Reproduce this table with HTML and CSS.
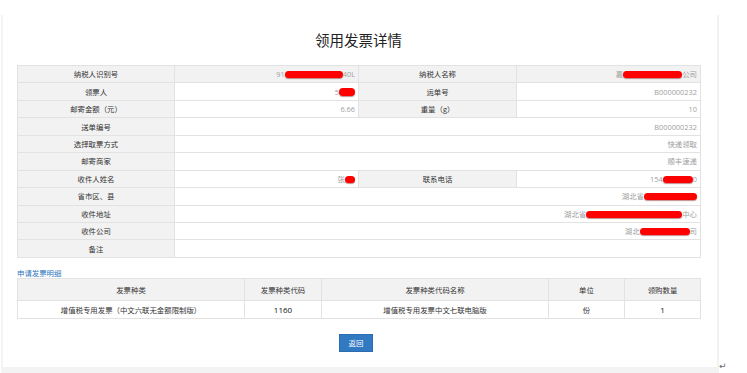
FILE: index.html
```html
<!DOCTYPE html>
<html lang="zh-CN">
<head>
<meta charset="utf-8">
<title>领用发票详情</title>
<link rel="stylesheet" href="styles.css">
</head>
<body>
<div class="page">
  <div class="panel">
    <h1 class="title">领用发票详情</h1>
    <table class="info">
      <colgroup><col class="c1"><col class="c2"><col class="c3"><col class="c4"></colgroup>
      <tr class="head-row">
        <td class="lbl">纳税人识别号</td><td class="val">91<span class="blob b1"></span>40L</td>
        <td class="lbl">纳税人名称</td><td class="val">嘉<span class="blob b2"></span>公司</td>
      </tr>
      <tr>
        <td class="lbl">领票人</td><td class="val">5<span class="blob b3"></span></td>
        <td class="lbl">运单号</td><td class="val">B000000232</td>
      </tr>
      <tr>
        <td class="lbl">邮寄金额（元）</td><td class="val">6.66</td>
        <td class="lbl">重量（g）</td><td class="val">10</td>
      </tr>
      <tr>
        <td class="lbl">送单编号</td><td class="val" colspan="3">B000000232</td>
      </tr>
      <tr>
        <td class="lbl">选择取票方式</td><td class="val" colspan="3">快递领取</td>
      </tr>
      <tr>
        <td class="lbl">邮寄商家</td><td class="val" colspan="3">顺丰速递</td>
      </tr>
      <tr>
        <td class="lbl">收件人姓名</td><td class="val">张<span class="blob b4"></span></td>
        <td class="lbl">联系电话</td><td class="val">154<span class="blob b5"></span>0</td>
      </tr>
      <tr>
        <td class="lbl">省市区、县</td><td class="val" colspan="3">湖北省<span class="blob b6"></span></td>
      </tr>
      <tr>
        <td class="lbl">收件地址</td><td class="val" colspan="3">湖北省<span class="blob b7"></span>中心</td>
      </tr>
      <tr>
        <td class="lbl">收件公司</td><td class="val" colspan="3">湖北<span class="blob b8"></span>司</td>
      </tr>
      <tr>
        <td class="lbl">备注</td><td class="val" colspan="3"></td>
      </tr>
    </table>

    <div class="section-title">申请发票明细</div>
    <table class="detail">
      <colgroup><col class="d1"><col class="d2"><col class="d3"><col class="d4"><col class="d5"></colgroup>
      <tr class="dhead">
        <td>发票种类</td><td>发票种类代码</td><td>发票种类代码名称</td><td>单位</td><td>领购数量</td>
      </tr>
      <tr class="dbody">
        <td>增值税专用发票（中文六联无金额限制版）</td><td class="num">1160</td><td>增值税专用发票中文七联电脑版</td><td>份</td><td class="num">1</td>
      </tr>
    </table>

    <div class="actions">
      <button class="btn" type="button">返回</button>
    </div>
  </div>
  <span class="return-mark">↵</span>
</div>
</body>
</html>
```

FILE: styles.css
```css
html, body {
  margin: 0;
  padding: 0;
  background: #ffffff;
}

body {
  font-family: "Open Sans", "Noto Sans CJK SC", sans-serif;
  color: #333333;
}

.page {
  position: relative;
  width: 747px;
  height: 373px;
  overflow: hidden;
}

.panel {
  margin: 15px 0 0 1px;
  width: 718px;
  height: 358px;
  box-sizing: border-box;
  border-left: 2px solid #f4f4f4;
  border-right: 2px solid #f2f2f2;
  border-bottom: 6px solid #f3f3f3;
  padding: 15px 17px 0 14px;
  display: flex;
  flex-direction: column;
}

.title {
  margin: 0;
  height: 20px;
  line-height: 20px;
  font-size: 14.5px;
  font-weight: normal;
  text-align: center;
  color: #222222;
  font-family: "Noto Sans CJK SC", sans-serif;
  width: 683px;
}

table {
  border-collapse: collapse;
  table-layout: fixed;
  width: 683px;
  font-size: 7.4px;
}

td {
  border: 1px solid #e2e2e2;
  padding: 0 3px;
  white-space: nowrap;
  overflow: hidden;
}

.info {
  margin-top: 15px;
}

.info col.c1 { width: 157px; }
.info col.c2 { width: 184px; }
.info col.c3 { width: 158px; }
.info col.c4 { width: 184px; }

.info td {
  height: 16.45px;
  line-height: 10px;
}

.lbl {
  background: #f2f2f2;
  text-align: center;
  color: #333333;
}

.val {
  text-align: right;
  color: #a0a0a0;
  background: #ffffff;
}

.head-row .val {
  background: #f2f2f2;
}

.blob {
  display: inline-block;
  height: 7px;
  vertical-align: -1px;
  background: #ff0000;
  border-radius: 4px;
  box-shadow: 0 1px 1px rgba(120, 0, 0, 0.45);
}

.b1 { width: 58px; }
.b2 { width: 59px; }
.b3 { width: 16px; height: 8px; }
.b4 { width: 10px; height: 7px; }
.b5 { width: 30px; }
.b6 { width: 53px; }
.b7 { width: 96px; }
.b8 { width: 50px; }

.section-title {
  margin-top: 10px;
  height: 10px;
  line-height: 10px;
  font-size: 7.4px;
  color: #2f75c0;
  margin-bottom: 0;
}

.detail col.d1 { width: 227px; }
.detail col.d2 { width: 77px; }
.detail col.d3 { width: 227px; }
.detail col.d4 { width: 76px; }
.detail col.d5 { width: 76px; }

.detail td {
  text-align: center;
  color: #333333;
}

.detail td.num {
  color: #111111;
  font-size: 8px;
}

.dhead td {
  background: #f2f2f2;
  height: 21.4px;
}

.dbody td {
  background: #ffffff;
  height: 16.6px;
}

.actions {
  display: flex;
  justify-content: center;
  width: 683px;
  margin-top: 15px;
}

.btn {
  width: 34px;
  height: 18px;
  margin-right: 5px;
  padding: 0;
  border: 1px solid #2a6db2;
  background: #3179c1;
  color: #ffffff;
  font-family: "Noto Sans CJK SC", sans-serif;
  font-size: 7.4px;
  line-height: 16px;
}

.return-mark {
  position: absolute;
  left: 719px;
  top: 361px;
  font-size: 9px;
  line-height: 10px;
  color: #666666;
  font-family: "DejaVu Sans", sans-serif;
}
```
